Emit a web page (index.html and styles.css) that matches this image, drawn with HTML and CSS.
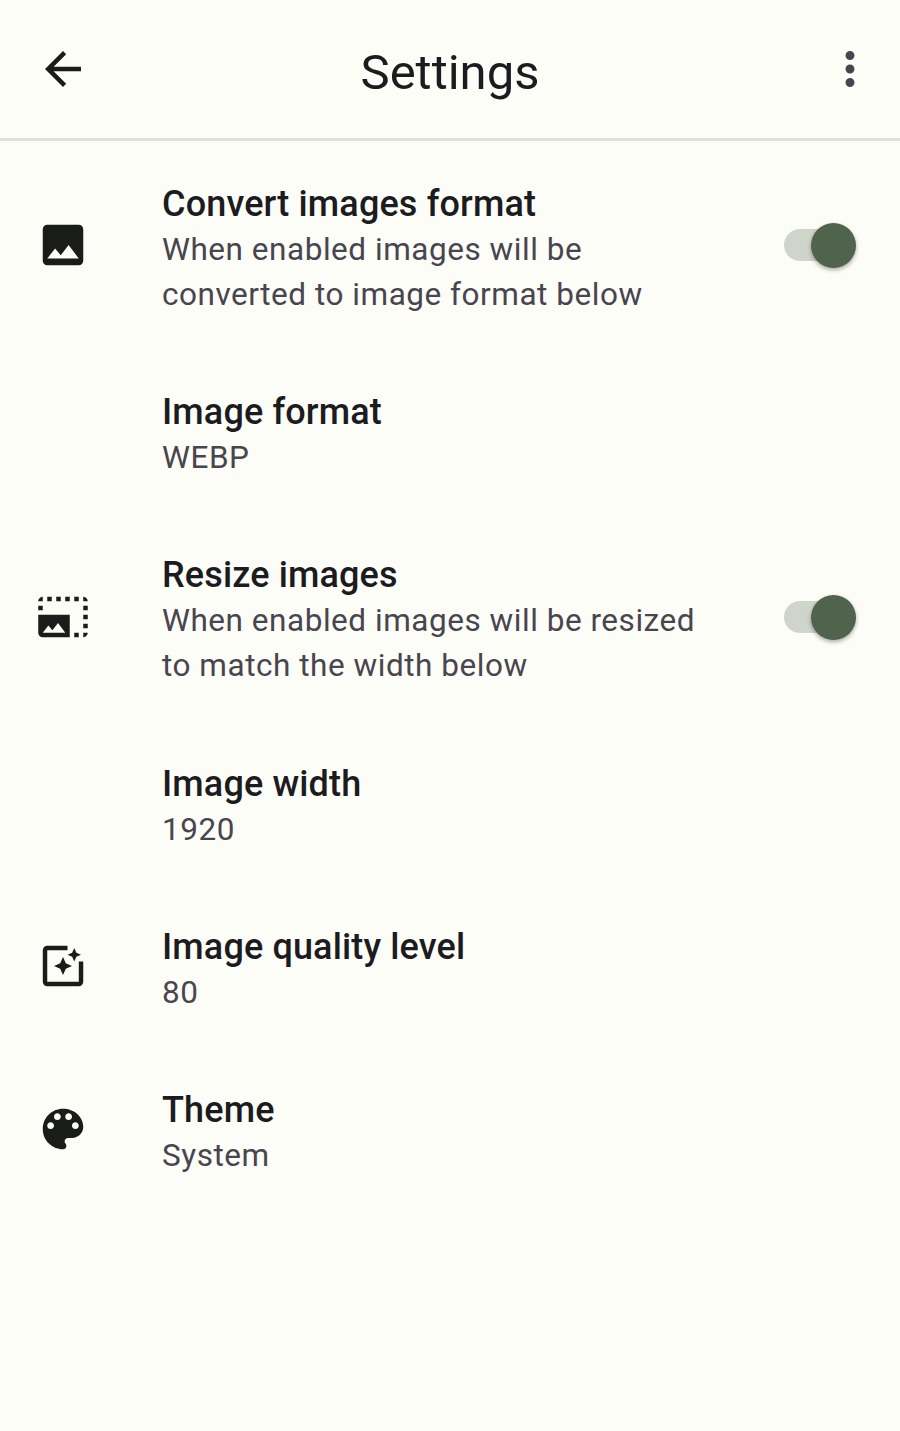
FILE: index.html
```html
<!DOCTYPE html>
<html lang="en">
<head>
<meta charset="utf-8">
<title>Settings</title>
<link rel="stylesheet" href="styles.css">
</head>
<body>
<header class="bar">
  <svg class="back" viewBox="0 0 24 24"><path d="M20 11H7.83l5.59-5.59L12 4l-8 8 8 8 1.41-1.41L7.83 13H20v-2z"/></svg>
  <h1 class="heading">Settings</h1>
  <svg class="more" viewBox="0 0 24 24"><path d="M12 8c1.1 0 2-.9 2-2s-.9-2-2-2-2 .9-2 2 .9 2 2 2zm0 2c-1.1 0-2 .9-2 2s.9 2 2 2 2-.9 2-2-.9-2-2-2zm0 6c-1.1 0-2 .9-2 2s.9 2 2 2 2-.9 2-2-.9-2-2-2z"/></svg>
</header>
<main class="list">
  <section class="row tall">
    <div class="lead"><svg class="icon" viewBox="0 0 24 24"><path d="M21 19V5c0-1.1-.9-2-2-2H5c-1.1 0-2 .9-2 2v14c0 1.1.9 2 2 2h14c1.1 0 2-.9 2-2zM8.5 13.5l2.5 3.01L14.500 12l4.500 6H5l3.500-4.500z"/></svg></div>
    <div class="text"><h2 class="title">Convert images format</h2><p class="sub">When enabled images will be<br>converted to image format below</p></div>
    <div class="switch"><span class="thumb"></span></div>
  </section>
  <section class="row">
    <div class="lead"></div>
    <div class="text"><h2 class="title">Image format</h2><p class="sub">WEBP</p></div>
  </section>
  <section class="row tall">
    <div class="lead"><svg class="icon" viewBox="0 0 24 24"><path d="M21 15h2v2h-2v-2zm0-4h2v2h-2v-2zm2 8h-2v2c1 0 2-1 2-2zM13 3h2v2h-2V3zm8 4h2v2h-2V7zm0-4v2h2c0-1-1-2-2-2zM1 7h2v2H1V7zm16-4h2v2h-2V3zm0 16h2v2h-2v-2zM3 3C2 3 1 4 1 5h2V3zm6 0h2v2H9V3zM5 3h2v2H5V3zm-4 8v8c0 1.1.9 2 2 2h12V11H1zm2 8l2.500-3.210 1.790 2.150 2.500-3.220L13 19H3z"/></svg></div>
    <div class="text"><h2 class="title">Resize images</h2><p class="sub">When enabled images will be resized<br>to match the width below</p></div>
    <div class="switch"><span class="thumb"></span></div>
  </section>
  <section class="row">
    <div class="lead"></div>
    <div class="text"><h2 class="title">Image width</h2><p class="sub">1920</p></div>
  </section>
  <section class="row">
    <div class="lead"><svg class="icon" viewBox="0 0 24 24"><path d="M19.020 10v9H5V5h9V3H5.020c-1.100 0-2 .9-2 2v14c0 1.100.9 2 2 2H19c1.100 0 2-.9 2-2v-9h-1.980zM17 10l.94-2.060L20 7l-2.060-.94L17 4l-.94 2.060L14 7l2.060.94L17 10zm-3.750.75L12 8l-1.250 2.750L8 12l2.750 1.250L12 16l1.250-2.750L16 12l-2.750-1.250z"/></svg></div>
    <div class="text"><h2 class="title">Image quality level</h2><p class="sub">80</p></div>
  </section>
  <section class="row">
    <div class="lead"><svg class="icon" viewBox="0 0 24 24"><path d="M12 3c-4.970 0-9 4.030-9 9s4.030 9 9 9c.83 0 1.500-.67 1.500-1.500 0-.39-.15-.74-.39-1.010-.23-.26-.38-.61-.38-.99 0-.83.67-1.500 1.500-1.500H16c2.760 0 5-2.240 5-5 0-4.420-4.030-8-9-8zm-5.500 9c-.83 0-1.500-.67-1.500-1.500S5.670 9 6.500 9 8 9.670 8 10.500 7.330 12 6.500 12zm3-4C8.670 8 8 7.330 8 6.500S8.670 5 9.500 5s1.500.67 1.500 1.500S10.330 8 9.500 8zm5 0c-.83 0-1.500-.67-1.500-1.500S13.670 5 14.500 5s1.500.67 1.500 1.500S15.330 8 14.500 8zm3 4c-.83 0-1.500-.67-1.500-1.500S16.670 9 17.500 9s1.500.67 1.500 1.500-.67 1.500-1.500 1.500z"/></svg></div>
    <div class="text"><h2 class="title">Theme</h2><p class="sub">System</p></div>
  </section>
</main>
</body>
</html>
```
FILE: styles.css
```css
* { box-sizing: border-box; }
body { margin: 0; min-height: 1431px; background: #fdfdf7; color: #1c1b1f; font-family: Roboto, sans-serif; }
.bar { display: grid; grid-template-columns: 126px 1fr 126px; align-items: center; height: 141px; border-bottom: 3px solid #dfe0dc; }
.back, .more { width: 54px; height: 54px; justify-self: center; fill: #1a1c19; }
.more { justify-self: end; margin-right: 23px; fill: #49454f; }
.heading { margin: 6px 0 0; text-align: center; font-size: 49px; font-weight: 400; }
.row { display: flex; align-items: center; height: 163.3px; padding-right: 44px; }
.tall { height: 208.3px; }
.lead { display: flex; justify-content: center; width: 126px; margin-right: 36px; }
.icon { width: 54px; height: 54px; fill: #1a1c19; }
.text { flex: 1; padding-top: 8px; }
.title { margin: 0; font-size: 36px; font-weight: 500; line-height: 45px; letter-spacing: .14px; }
.sub { margin: 0; color: #49454f; font-size: 31.5px; line-height: 45px; letter-spacing: .53px; }
.switch { position: relative; width: 72px; height: 32px; border-radius: 16px; background: #cfd5ca; }
.thumb { position: absolute; right: 0; top: -6px; width: 45px; height: 45px; border-radius: 50%; background: #50634c; box-shadow: 0 2px 4px #0005; }
```
